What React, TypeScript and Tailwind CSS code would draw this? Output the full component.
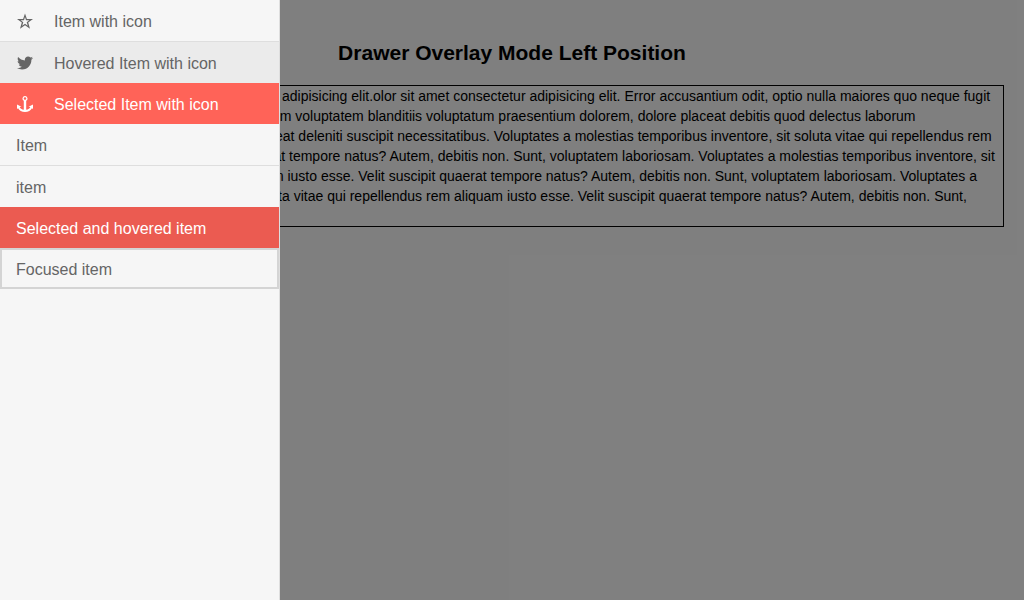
import type { ReactNode } from 'react';
import { FaTwitter } from 'react-icons/fa';

type Item = { label: string; icon?: ReactNode; look: string };

function StarIcon() {
  return (
    <svg viewBox="0 0 16 16" className="size-4" fill="currentColor" aria-hidden="true">
      <path
        fillRule="evenodd"
        d="M8 0.500L9.900 6H16L11.200 9.600L13 15.800L8 12.200L3 15.800L4.800 9.600L0 6H6.100ZM8 4L7 7.200H3.700L6.300 9.200L5.200 12.700L8 10.700L10.800 12.700L9.700 9.200L12.300 7.200H9Z"
      />
    </svg>
  );
}

function AnchorIcon() {
  return (
    <svg viewBox="0 0 16 16" className="size-4" fill="currentColor" aria-hidden="true">
      <path
        fillRule="evenodd"
        d="M8 0a2.500 2.500 0 0 1 1.200 4.700V13.800c2-.3 3.700-1.300 4.100-2.800L11.500 10.800L16 8.500V13L14.900 12.200C13.800 14.500 11.200 16 8 16S2.200 14.500 1.100 12.200L0 13V8.500L4.500 10.800L2.700 11C3.100 12.500 4.800 13.500 6.800 13.800V4.700A2.500 2.500 0 0 1 8 0ZM8 1.200a1.300 1.300 0 1 0 0 2.600a1.300 1.300 0 0 0 0-2.600Z"
      />
    </svg>
  );
}

const plain = 'text-[#656565]';

const items: Item[] = [
  { label: 'Item with icon', icon: <StarIcon />, look: `${plain} border-b border-[#dedede]` },
  { label: 'Hovered Item with icon', icon: <FaTwitter size={16} />, look: `${plain} bg-[#ebebeb]` },
  { label: 'Selected Item with icon', icon: <AnchorIcon />, look: 'bg-[#ff6358] text-white' },
  { label: 'Item', look: `${plain} border-b border-[#dedede]` },
  { label: 'item', look: plain },
  { label: 'Selected and hovered item', look: 'bg-[#eb5b51] text-white' },
  { label: 'Focused item', look: `${plain} inset-ring-2 inset-ring-[#d4d4d4]` },
];

const lines = [
  'Lorem ipsum dolor sit amet consectetur adipisicing elit.olor sit amet consectetur adipisicing elit. Error accusantium odit, optio nulla maiores quo neque fugit',
  'nesciunt sapiente iste, ea harum et ipsum voluptatem blanditiis voluptatum praesentium dolorem, dolore placeat debitis quod delectus laborum',
  'assumenda similique! Provident in placeat deleniti suscipit necessitatibus. Voluptates a molestias temporibus inventore, sit soluta vitae qui repellendus rem',
  'aliquam iusto esse. Velit suscipit quaerat tempore natus? Autem, debitis non. Sunt, voluptatem laboriosam. Voluptates a molestias temporibus inventore, sit',
  'soluta vitae qui repellendus rem aliquam iusto esse. Velit suscipit quaerat tempore natus? Autem, debitis non. Sunt, voluptatem laboriosam. Voluptates a',
  'molestias temporibus inventore, sit soluta vitae qui repellendus rem aliquam iusto esse. Velit suscipit quaerat tempore natus? Autem, debitis non. Sunt,',
  'voluptatem laboriosam.',
];

export default function App() {
  return (
    <div className="relative min-h-screen overflow-hidden font-['Liberation_Sans',Arial,sans-serif]">
      <main className="px-5 pt-10 text-black">
        <h1 className="text-center text-[21px] leading-[25px] font-bold">Drawer Overlay Mode Left Position</h1>
        <div className="mt-5 border border-black pl-3">
          <p className="text-sm leading-5">
            {lines.map((line) => (
              <span key={line} className="block whitespace-nowrap">
                {line}
              </span>
            ))}
          </p>
        </div>
      </main>
      <div className="absolute inset-0 bg-black/50" />
      <nav
        aria-label="Drawer"
        className="absolute inset-y-0 left-0 w-[280px] border-r border-[#dedede] bg-[#f6f6f6]"
      >
        <ul>
          {items.map(({ label, icon, look }) => (
            <li key={label}>
              <button type="button" className={`flex w-full items-center px-4 pt-2.5 pb-[7px] text-left text-base leading-6 ${look}`}>
                {icon && <span className="mr-5 flex w-[18px] justify-center pb-0.5">{icon}</span>}
                <span>{label}</span>
              </button>
            </li>
          ))}
        </ul>
      </nav>
    </div>
  );
}
